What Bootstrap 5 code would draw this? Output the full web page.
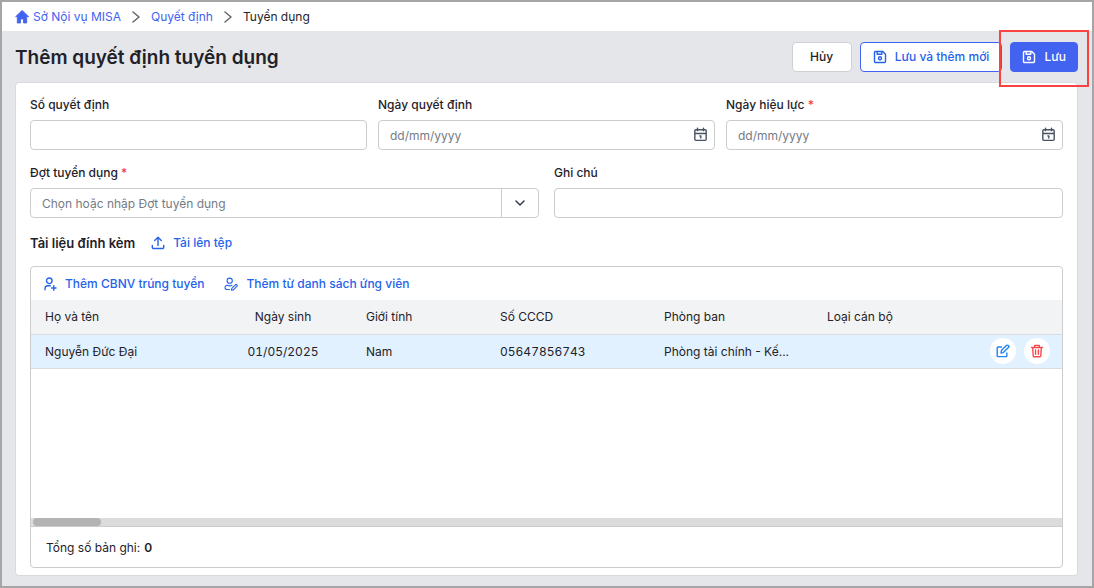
<!DOCTYPE html>
<html lang="vi">
<head>
<meta charset="utf-8">
<meta name="viewport" content="width=device-width, initial-scale=1">
<title>Thêm quyết định tuyển dụng</title>
<link href="https://cdn.jsdelivr.net/npm/bootstrap@5.3.0/dist/css/bootstrap.min.css" rel="stylesheet">
<style>
  body { font-family: Inter, "Liberation Sans", sans-serif; font-size: 12px; line-height: 20px; color: #1f2229; }
  svg { display: block; flex: none; fill: none; stroke: currentColor; stroke-linecap: round; stroke-linejoin: round; }
  .page { background: #e5e6ea; border: 2px solid #a5a5a5; }
  .crumbs { height: 29px; padding: 0 13px; background: #fff; }
  .crumbs a { color: #4262f0; }
  .crumbs .sep { color: #62666d; margin: 0 11px; }
  .titlebar { height: 51px; padding: 0 14px 0 13px; }
  .titlebar h1 { padding-top: 2px; font-size: 19px; line-height: 28px; font-weight: 600; }
  .actions .btn { height: 30px; padding: 0 12px; gap: 8px; font-size: 12px; line-height: 20px; border-radius: 4px; }
  .actions .btn-cancel { width: 60px; background: #fff; border-color: #cfd0d4; color: #1f2229; }
  .actions .btn-more { background: #fff; border-color: #4262f0; color: #2563eb; }
  .actions .btn-save { padding: 0 11px; background: #4262f0; border-color: #4262f0; color: #fff; }
  .spot { position: absolute; inset: -12px -11px -15px -11px; border: 2px solid #f94242; pointer-events: none; }
  .panel { margin: 0 14px 10px 13px; padding: 12px 14px 7px; background: #fff; border: 1px solid #d9dadd; border-radius: 4px; }
  .fields { gap: 11px; margin-bottom: 13px; }
  .fields.two { gap: 15px; margin-bottom: 15px; }
  .field { flex: 1 1 0; min-width: 0; }
  .field label { display: block; margin-bottom: 5px; font-weight: 500; }
  .req { color: #f03e3e; }
  .field .form-control { height: 30px; padding: 0 11px; font-size: 12px; border-color: #cbccd0; border-radius: 4px; color: #1f2229; }
  .field .form-control::placeholder { color: #757b85; }
  .field .icon-btn { position: absolute; right: 7px; top: 7px; color: #475260; z-index: 2; }
  .field .combo .form-control { border-radius: 4px 0 0 4px; }
  .combo .btn { width: 38px; padding: 0; border-color: #cbccd0; border-radius: 0 4px 4px 0; color: #333b48; }
  .icon-btn { border: 0; background: none; padding: 0; }
  .bluelink { color: #2563eb; font-weight: 500; }
  .section-title { font-size: 13px; font-weight: 600; }
  .grid-box { margin-top: 13px; border: 1px solid #cbccd0; border-radius: 4px; }
  .grid-tools { height: 33px; padding: 0 12px; gap: 20px; }
  .grid-table { table-layout: fixed; width: 100%; }
  .grid-table th, .grid-table td { height: 34px; padding: 1px 14px 0; font-weight: 400; border-bottom: 1px solid #d9dce1; white-space: nowrap; }
  .grid-table thead th { background: #f2f3f5; }
  .grid-table tbody td { background: #e1f1ff; }
  .grid-table td:last-child { padding: 0 12px 0 0; }
  .grid-table .digits { font-variant-numeric: tabular-nums; }
  .round { width: 26px; height: 26px; border-radius: 50%; background: #fff; }
  .round.edit { color: #2382f5; }
  .round.remove { color: #f5484d; }
  .track { height: 8px; padding-left: 2px; background: #dcdcdc; }
  .thumb { width: 68px; height: 8px; border-radius: 4px; background: #b3b3b3; }
  .grid-foot { height: 41px; padding: 1px 15px 0; border-top: 1px solid #cbccd0; }
</style>
</head>
<body>
<svg width="0" height="0" class="position-absolute" aria-hidden="true">
  <symbol id="save" viewBox="0 0 14 14"><path d="M2.500 1.500h7.300l2.700 2.700v7.300a1 1 0 0 1-1 1h-9a1 1 0 0 1-1-1v-9a1 1 0 0 1 1-1zM4.200 1.700v2.600h4.600V1.700"/><circle cx="7" cy="8.300" r="1.500"/></symbol>
  <symbol id="cal" viewBox="0 0 14 14"><path d="M2.700 2.500h8.600a1 1 0 0 1 1 1v8a1 1 0 0 1-1 1H2.700a1 1 0 0 1-1-1v-8a1 1 0 0 1 1-1zM1.700 6h10.600M4.200 1v2.400M9.800 1v2.400M6.400 8.300h.9v1.900"/></symbol>
  <symbol id="sep" viewBox="0 0 8 12"><path d="M1 1l6 5-6 5"/></symbol>
</svg>

<div class="page min-vh-100 d-flex flex-column">
  <nav class="crumbs d-flex align-items-center" aria-label="breadcrumb">
    <a href="#" class="d-flex align-items-center gap-1 text-decoration-none">
      <svg width="14" height="14" viewBox="0 0 14 14"><path d="M7 .5L.6 6.700h1.700V13h3.200V9h3v4h3.200V6.700h1.700z" fill="currentColor" stroke-width=".8"/></svg>
      Sở Nội vụ MISA
    </a>
    <svg class="sep" width="8" height="12" stroke-width="1.500"><use href="#sep"/></svg>
    <a href="#" class="text-decoration-none">Quyết định</a>
    <svg class="sep" width="8" height="12" stroke-width="1.500"><use href="#sep"/></svg>
    <span>Tuyển dụng</span>
  </nav>

  <header class="titlebar d-flex align-items-center justify-content-between">
    <h1 class="m-0">Thêm quyết định tuyển dụng</h1>
    <div class="actions d-flex gap-2">
      <button type="button" class="btn btn-cancel fw-medium">Hủy</button>
      <button type="button" class="btn btn-more fw-medium d-flex align-items-center">
        <svg width="14" height="14" stroke-width="1.400"><use href="#save"/></svg>Lưu và thêm mới
      </button>
      <div class="position-relative">
        <button type="button" class="btn btn-save fw-medium d-flex align-items-center">
          <svg width="14" height="14" stroke-width="1.400"><use href="#save"/></svg>Lưu
        </button>
        <span class="spot"></span>
      </div>
    </div>
  </header>

  <main class="panel flex-grow-1 d-flex flex-column">
    <div class="fields d-flex">
      <div class="field">
        <label for="so">Số quyết định</label>
        <input id="so" type="text" class="form-control">
      </div>
      <div class="field">
        <label for="ngayqd">Ngày quyết định</label>
        <div class="position-relative">
          <input id="ngayqd" type="text" class="form-control" placeholder="dd/mm/yyyy">
          <button type="button" class="icon-btn" aria-label="Chọn ngày quyết định"><svg width="15" height="15" stroke-width="1.300"><use href="#cal"/></svg></button>
        </div>
      </div>
      <div class="field">
        <label for="ngayhl">Ngày hiệu lực <span class="req">*</span></label>
        <div class="position-relative">
          <input id="ngayhl" type="text" class="form-control" placeholder="dd/mm/yyyy">
          <button type="button" class="icon-btn" aria-label="Chọn ngày hiệu lực"><svg width="15" height="15" stroke-width="1.300"><use href="#cal"/></svg></button>
        </div>
      </div>
    </div>

    <div class="fields two d-flex">
      <div class="field">
        <label for="dot">Đợt tuyển dụng <span class="req">*</span></label>
        <div class="input-group combo">
          <input id="dot" type="text" class="form-control" placeholder="Chọn hoặc nhập Đợt tuyển dụng">
          <button type="button" class="btn d-flex align-items-center justify-content-center" aria-label="Mở danh sách"><svg width="10" height="6" viewBox="0 0 10 6" stroke-width="1.500"><path d="M1 1l4 4 4-4"/></svg></button>
        </div>
      </div>
      <div class="field">
        <label for="ghichu">Ghi chú</label>
        <input id="ghichu" type="text" class="form-control">
      </div>
    </div>

    <div class="d-flex align-items-center">
      <span class="section-title me-3">Tài liệu đính kèm</span>
      <button type="button" class="icon-btn bluelink d-flex align-items-center gap-2">
        <svg width="14" height="14" viewBox="0 0 14 14" stroke-width="1.400"><path d="M7 9.500V1.500M3.700 4.500L7 1.300l3.300 3.200M1.300 9.500v2a1 1 0 0 0 1 1h9.400a1 1 0 0 0 1-1v-2"/></svg>Tải lên tệp
      </button>
    </div>

    <section class="grid-box flex-grow-1 d-flex flex-column">
      <div class="grid-tools d-flex align-items-center">
        <button type="button" class="icon-btn bluelink d-flex align-items-center gap-2">
          <svg width="14" height="14" viewBox="0 0 14 14" stroke-width="1.400"><circle cx="6.300" cy="3.800" r="2.800"/><path d="M2 12.800v-1.300a2.800 2.800 0 0 1 2.800-2.800h2.500M10.800 8.800v4.400M8.600 11h4.400"/></svg>Thêm CBNV trúng tuyển
        </button>
        <button type="button" class="icon-btn bluelink d-flex align-items-center gap-2">
          <svg width="14" height="14" viewBox="0 0 14 14" stroke-width="1.100"><circle cx="5.700" cy="3.700" r="2.600"/><path d="M5.500 12.500H3a2 2 0 0 1-2-2 2.500 2.500 0 0 1 2.500-2.200c1.500.8 3 .8 4.500 0M7.500 13.200l.3-1.800 3.600-3.600a1 1 0 0 1 1.500 1.500l-3.600 3.600z"/></svg>Thêm từ danh sách ứng viên
        </button>
      </div>
      <table class="grid-table">
        <colgroup><col style="width:183px"><col style="width:138px"><col style="width:134px"><col style="width:164px"><col style="width:163px"><col><col style="width:108px"></colgroup>
        <thead>
          <tr><th>Họ và tên</th><th class="text-center">Ngày sinh</th><th>Giới tính</th><th>Số CCCD</th><th>Phòng ban</th><th>Loại cán bộ</th><th></th></tr>
        </thead>
        <tbody>
          <tr>
            <td>Nguyễn Đức Đại</td><td class="text-center digits">01/05/2025</td><td>Nam</td><td class="digits">05647856743</td><td>Phòng tài chính - Kế...</td><td></td>
            <td>
              <div class="d-flex justify-content-end gap-2">
                <button type="button" class="icon-btn round edit d-flex align-items-center justify-content-center" aria-label="Sửa"><svg width="14" height="14" viewBox="0 0 14 14" stroke-width="1.400"><path d="M5.500 3H2a.8.800 0 0 0-.8.800v8a.8.800 0 0 0 .8.800h8a.8.800 0 0 0 .8-.8V9M5 9l.4-2.400 5-5a1.300 1.300 0 0 1 2 2l-5 5z"/></svg></button>
                <button type="button" class="icon-btn round remove d-flex align-items-center justify-content-center" aria-label="Xóa"><svg width="14" height="14" viewBox="0 0 14 14" stroke-width="1.400"><path d="M1.500 3.500h11M4.700 3.300V1.400h4.600v1.900M2.700 3.700l.5 8a1 1 0 0 0 1 1h5.600a1 1 0 0 0 1-1l.5-8M5.600 6v4.200M8.400 6v4.200"/></svg></button>
              </div>
            </td>
          </tr>
        </tbody>
      </table>
      <div class="track mt-auto"><div class="thumb"></div></div>
      <div class="grid-foot d-flex align-items-center gap-1">Tổng số bản ghi: <strong class="fw-semibold">0</strong></div>
    </section>
  </main>
</div>
<script src="https://cdn.jsdelivr.net/npm/bootstrap@5.3.0/dist/js/bootstrap.bundle.min.js"></script>
</body>
</html>
